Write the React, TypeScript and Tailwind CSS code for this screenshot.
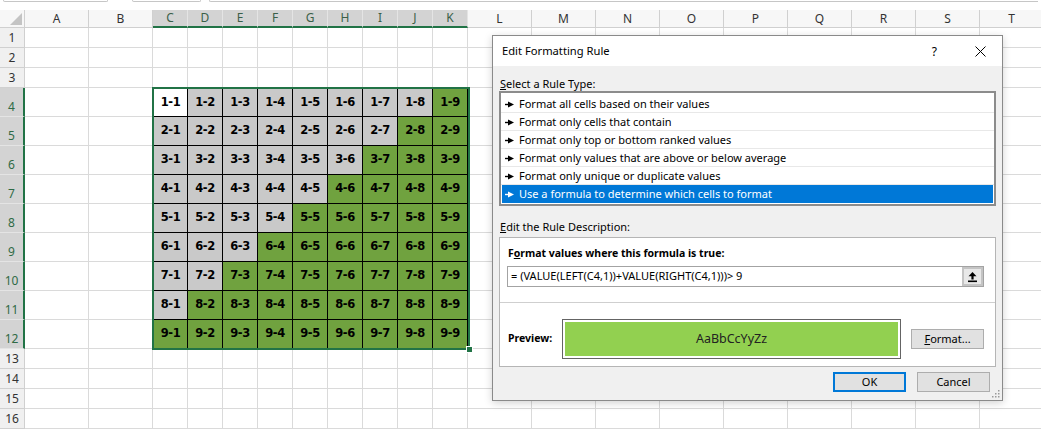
import React from 'react';

type Col = { label: string; w: string; sel: boolean };

const cols: Col[] = [
  { label: 'A', w: 'w-[64px]', sel: false },
  { label: 'B', w: 'w-[64px]', sel: false },
  ...['C', 'D', 'E', 'F', 'G', 'H', 'I', 'J', 'K'].map((l) => ({ label: l, w: 'w-[35px]', sel: true })),
  ...['L', 'M', 'N', 'O', 'P', 'Q', 'R', 'S', 'T'].map((l) => ({ label: l, w: 'w-[64px]', sel: false })),
];

const rows = Array.from({ length: 16 }, (_, i) => i + 1);

const rules = [
  'Format all cells based on their values',
  'Format only cells that contain',
  'Format only top or bottom ranked values',
  'Format only values that are above or below average',
  'Format only unique or duplicate values',
  'Use a formula to determine which cells to format',
];

const Bullet = ({ white }: { white?: boolean }) => (
  <svg width="9" height="7" viewBox="0 0 9 7" className="shrink-0">
    <path d="M0 3.5 H4" stroke={white ? '#fff' : '#000'} strokeWidth="1.4" />
    <path d="M3 0.5 L9 3.5 L3 6.5 Z" fill={white ? '#fff' : '#000'} />
  </svg>
);

const TableCell = ({ i, j, w }: { i: number; j: number; w: string }) => {
  let bg = 'bg-[#c9c9c9]';
  if (i === 1 && j === 1) bg = 'bg-white';
  else if (i + j > 9) bg = 'bg-[#70a23f]';
  return (
    <div
      className={`${w} ${bg} h-full shrink-0 border-r border-b border-black ${i === 1 ? 'border-t' : ''} ${
        j === 1 ? 'border-l' : ''
      } flex items-center justify-center text-[11.5px] font-bold text-black font-['DejaVu_Sans',sans-serif] tracking-[-0.4px]`}
    >
      {i}-{j}
    </div>
  );
};

const Dialog = () => (
  <div className="absolute left-[492px] top-[35px] w-[511px] border border-[#8a8a8a] bg-[#f0f0f0] shadow-[0_2px_8px_rgba(0,0,0,0.18)] font-['Noto_Sans',sans-serif] text-[11px] text-black">
    {/* title bar */}
    <div className="h-[30px] bg-white flex items-center pl-[9px] pr-[16px] pt-px">
      <span className="text-[11.2px]">Edit Formatting Rule</span>
      <span className="ml-auto mr-[38px] text-[12px]">?</span>
      <svg width="11" height="11" viewBox="0 0 11 11">
        <path d="M0.5 0.5 L10.5 10.5 M10.5 0.5 L0.5 10.5" stroke="#000" strokeWidth="1" />
      </svg>
    </div>

    <div className="pl-[6px] pr-[6px] pb-[8px]">
      <div className="mt-[11px] h-[14px] leading-[14px] pl-px">
        <span className="underline">S</span>elect a Rule Type:
      </div>

      <div className="h-[115px] border-2 border-[#8c8c8c] bg-white pt-[2px]">
        {rules.map((r, idx) =>
          idx === rules.length - 1 ? (
            <div key={r} className="mx-px h-[18px] bg-[#0078d7] text-white flex items-center gap-[5px] pl-[3px] pt-px">
              <Bullet white />
              <span>{r}</span>
            </div>
          ) : (
            <div key={r} className="h-[18px] border-b border-[#e8e8e8] flex items-center gap-[5px] pl-[4px] pt-px">
              <Bullet />
              <span>{r}</span>
            </div>
          )
        )}
      </div>

      <div className="mt-[14px] h-[14px] leading-[14px] pl-px">
        <span className="underline">E</span>dit the Rule Description:
      </div>

      <div className="mt-[3px] h-[130px] border border-[#b5b5b5] bg-white">
        <div className="mt-[8px] h-[14px] leading-[14px] pl-[8px] font-bold text-[10.5px]">
          F<span className="underline">o</span>rmat values where this formula is true:
        </div>
        <div className="mt-[6px] ml-[7px] mr-[11px] h-[21px] border border-[#a3a3a3] flex items-center">
          <span className="pl-[3px] text-[11px]">= (VALUE(LEFT(C4,1))+VALUE(RIGHT(C4,1)))&gt; 9</span>
          <div className="ml-auto h-[19px] w-[21px] border-2 border-[#c4c4c4] bg-[#e8e8e8] flex items-center justify-center">
            <svg width="11" height="12" viewBox="0 0 11 12">
              <path d="M5.5 1 L1.5 5.2 H9.5 Z" fill="#000" />
              <rect x="4.4" y="5" width="2.2" height="3.5" fill="#000" />
              <rect x="1" y="9.5" width="9" height="1.6" fill="#000" />
            </svg>
          </div>
        </div>
        <div className="mt-[15px] h-px bg-[#cfcfcf]" />
        <div className="mt-[16px] flex items-center">
          <span className="pl-[8px] w-[62px] font-bold text-[10.5px]">Preview:</span>
          <div className="w-[339px] h-[40px] border border-[#646464] p-[2px] bg-white">
            <div className="h-full bg-[#92d050] flex items-center justify-center text-[12.5px] text-[#222]">
              AaBbCcYyZz
            </div>
          </div>
          <div className="ml-[10px] w-[73px] h-[20px] border border-[#adadad] bg-[#e1e1e1] flex items-center justify-center">
            <span className="underline">F</span>ormat...
          </div>
        </div>
      </div>

      <div className="mt-[5px] flex justify-end pr-[6px] gap-[11px]">
        <div className="w-[73px] h-[20px] border-2 border-[#0078d7] bg-[#e1e1e1] flex items-center justify-center">OK</div>
        <div className="w-[73px] h-[20px] border border-[#adadad] bg-[#e1e1e1] flex items-center justify-center">
          Cancel
        </div>
      </div>
    </div>

    <svg className="absolute right-[2px] bottom-[2px]" width="9" height="9" viewBox="0 0 9 9">
      {[
        [7, 1],
        [4, 4],
        [7, 4],
        [1, 7],
        [4, 7],
        [7, 7],
      ].map(([x, y]) => (
        <rect key={`${x}-${y}`} x={x} y={y} width="1.5" height="1.5" fill="#9a9a9a" />
      ))}
    </svg>
  </div>
);

export default function App() {
  return (
    <div className="relative w-[1041px] h-[431px] overflow-hidden bg-white font-['Noto_Sans',sans-serif]">
      {/* formula bar edge */}
      <div className="h-[10px] flex gap-[24px] px-[3px]">
        <div className="w-[105px] h-[2px] border-b border-x border-[#c6c6c6] rounded-b-[2px] bg-white" />
        <div className="w-[69px] h-[2px] border-b border-x border-[#c6c6c6] rounded-b-[2px] bg-white" />
        <div className="flex-1 h-[2px] border-b border-l border-[#c6c6c6] rounded-bl-[2px] bg-white -ml-[16px]" />
      </div>

      {/* column headers */}
      <div className="flex h-[18px]">
        <div className="w-[25px] shrink-0 bg-[#f7f7f7] border-r border-b border-[#d0d0d0] relative">
          <svg className="absolute right-[2px] bottom-[2px]" width="12" height="12" viewBox="0 0 12 12">
            <path d="M12 0 L12 12 L0 12 Z" fill="#c4c4c4" />
          </svg>
        </div>
        {cols.map((c) => (
          <div
            key={c.label}
            className={`${c.w} shrink-0 flex items-center justify-center text-[12px] ${
              c.sel
                ? 'bg-[#d3d3d3] border-r border-r-[#e4e4e4] border-b-2 border-b-[#217346] text-[#3a5f48]'
                : 'bg-[#f7f7f7] border-r border-b border-[#d0d0d0] text-[#333]'
            }`}
          >
            {c.label}
          </div>
        ))}
      </div>

      {/* rows */}
      {rows.map((r) => {
        const inTable = r >= 4 && r <= 12;
        return (
          <div key={r} className={`flex ${inTable ? 'h-[29px]' : 'h-[20px]'}`}>
            <div
              className={`w-[25px] shrink-0 flex items-end justify-center pb-[1px] text-[12px] leading-[16px] ${
                inTable
                  ? 'bg-[#d3d3d3] border-r-2 border-r-[#217346] border-b border-b-[#e4e4e4] text-[#2f6a45]'
                  : 'bg-[#f0f0f0] border-r border-b border-[#d0d0d0] text-[#333]'
              }`}
            >
              {r}
            </div>
            {cols.map((c, ci) =>
              inTable && ci >= 2 && ci <= 10 ? (
                <TableCell key={c.label} i={r - 3} j={ci - 1} w={c.w} />
              ) : (
                <div key={c.label} className={`${c.w} shrink-0 h-full border-r border-b border-[#dadada]`} />
              )
            )}
          </div>
        );
      })}

      {/* selection outline + fill handle */}
      <div className="absolute left-[152px] top-[87px] w-[318px] h-[263px] border-2 border-[#217346]" />
      <div className="absolute left-[466px] top-[346px] w-[7px] h-[7px] bg-[#217346] border border-white" />

      <Dialog />
    </div>
  );
}
